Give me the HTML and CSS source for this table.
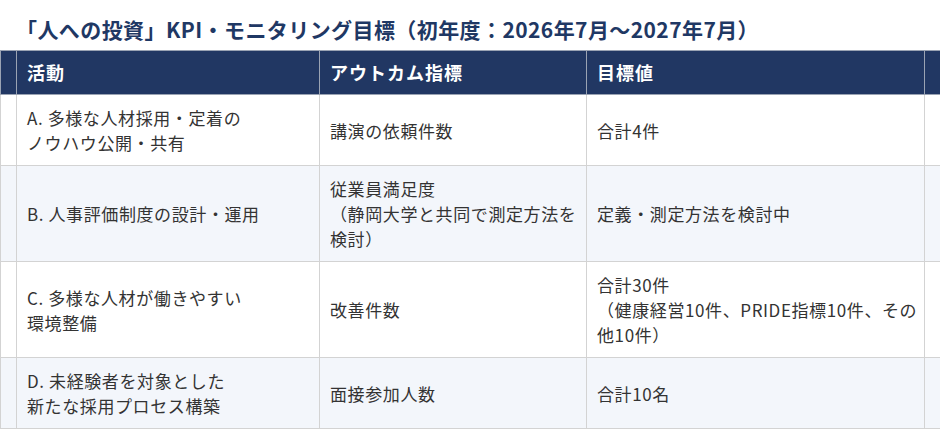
FILE: index.html
```html
<!DOCTYPE html>
<html lang="ja">
<head>
<meta charset="utf-8">
<link rel="stylesheet" href="styles.css">
</head>
<body>
<h2 class="title">「人への投資」KPI・モニタリング目標（初年度：2026年7月〜2027年7月）</h2>
<table class="kpi">
  <colgroup>
    <col class="c-edge">
    <col class="c-act">
    <col class="c-ind">
    <col class="c-goal">
    <col class="c-edge">
  </colgroup>
  <thead>
    <tr><th></th><th>活動</th><th>アウトカム指標</th><th>目標値</th><th></th></tr>
  </thead>
  <tbody>
    <tr class="r-a"><td></td><td>A. 多様な人材採用・定着の<br>ノウハウ公開・共有</td><td>講演の依頼件数</td><td>合計4件</td><td></td></tr>
    <tr class="alt r-b"><td></td><td>B. 人事評価制度の設計・運用</td><td>従業員満足度<br>（静岡大学と共同で測定方法を検討）</td><td>定義・測定方法を検討中</td><td></td></tr>
    <tr class="r-c"><td></td><td>C. 多様な人材が働きやすい<br>環境整備</td><td>改善件数</td><td>合計30件<br>（健康経営10件、PRIDE指標10件、その他10件）</td><td></td></tr>
    <tr class="alt r-d"><td></td><td>D. 未経験者を対象とした<br>新たな採用プロセス構築</td><td>面接参加人数</td><td>合計10名</td><td></td></tr>
  </tbody>
</table>
</body>
</html>
```
FILE: styles.css
```css
html, body {
  margin: 0;
  padding: 0;
  background: #ffffff;
}
body {
  font-family: "Noto Sans CJK JP", "Noto Sans", sans-serif;
  color: #333333;
}
.title {
  margin: 0;
  padding: 14px 0 0 16px;
  height: 36px;
  box-sizing: content-box;
  font-size: 21px;
  line-height: 30px;
  font-weight: 700;
  color: #1f3864;
  letter-spacing: 0.02em;
}
.kpi {
  border-collapse: collapse;
  table-layout: fixed;
  width: 940px;
  font-size: 17px;
  letter-spacing: 0.6px;
  line-height: 25px;
}
.c-edge { width: 16px; }
.c-act { width: 303px; }
.c-ind { width: 267px; }
.c-goal { width: 338px; }
.kpi th {
  background: #213763;
  color: #ffffff;
  font-weight: 700;
  text-align: left;
  padding: 9px 8px 9px 10px;
  border: 1px solid #9aa3b3;
  font-size: 18px;
  letter-spacing: 1px;
}
.kpi td {
  padding: 10px 4px 10px 10px;
  border: 1px solid #d3d3d3;
  vertical-align: middle;
}
.kpi th:first-child, .kpi td:first-child,
.kpi th:last-child, .kpi td:last-child {
  padding: 0;
}
.kpi tr.alt td {
  background: #f3f6fb;
}
.kpi tr.r-a td { height: 49px; }
.kpi tr.r-d td { height: 47px; }
```
